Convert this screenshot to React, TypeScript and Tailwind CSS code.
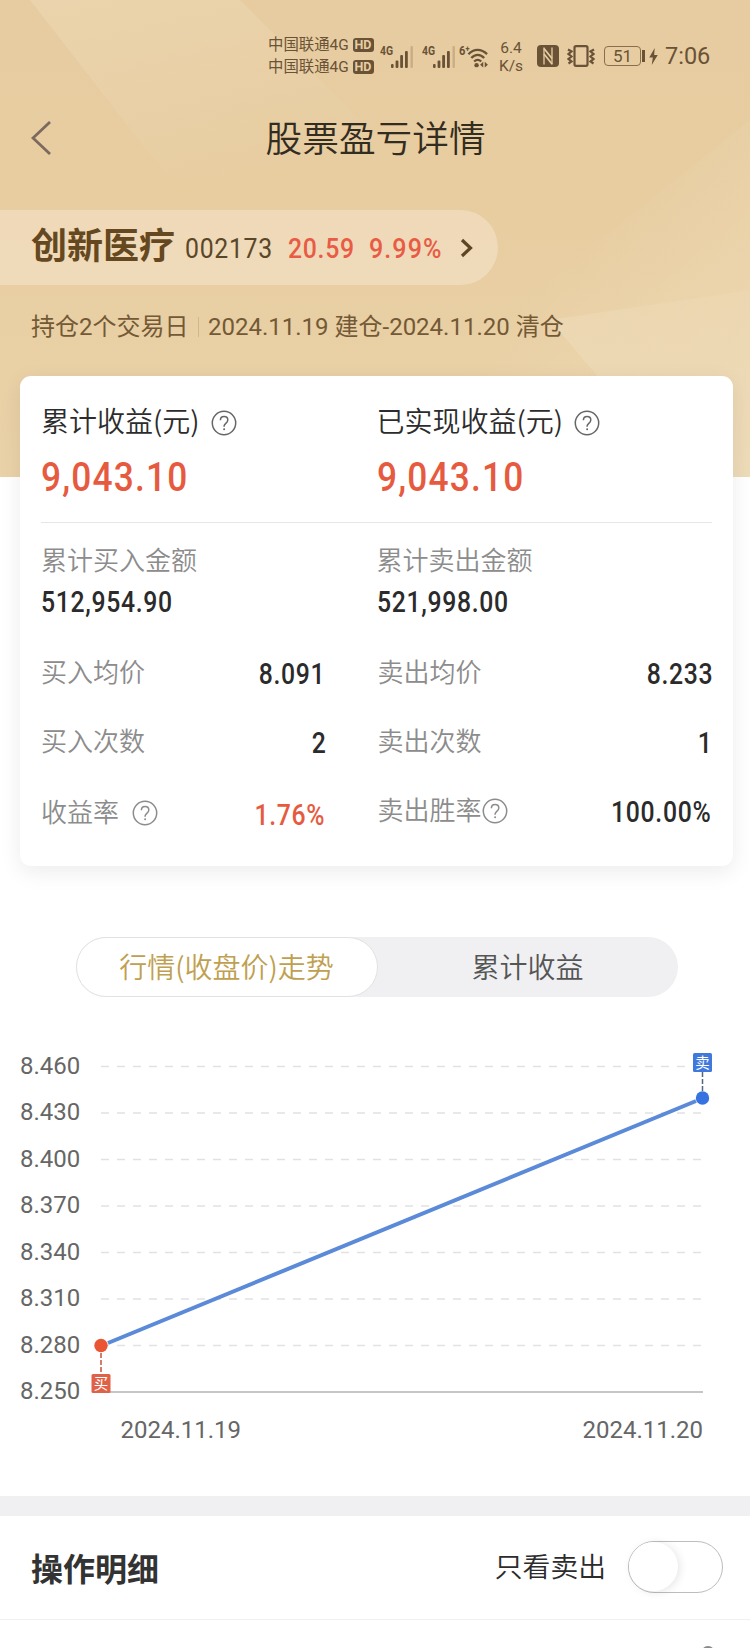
import type { ReactNode } from 'react';

type Row = {
  label: string;
  value: string;
  help?: boolean;
  red?: boolean;
  className?: string;
  valueClassName?: string;
};

const buyRows: Row[] = [
  { label: '买入均价', value: '8.091', valueClassName: 'mr-px' },
  { label: '买入次数', value: '2', valueClassName: '-mr-px' },
  { label: '收益率', value: '1.76%', help: true, red: true, className: 'pt-[5px]', valueClassName: 'mr-px' },
];

const sellRows: Row[] = [
  { label: '卖出均价', value: '8.233', valueClassName: '-mr-px' },
  { label: '卖出次数', value: '1', valueClassName: '-mr-px' },
  { label: '卖出胜率', value: '100.00%', help: true, valueClassName: 'mr-px' },
];

const ticks = ['8.460', '8.430', '8.400', '8.370', '8.340', '8.310', '8.280', '8.250'];

function HelpIcon({ className }: { className?: string }) {
  return (
    <svg viewBox="0 0 26 26" className={className} fill="none" stroke="currentColor" strokeWidth="1.5">
      <circle cx="13" cy="13" r="11.7" />
      <path d="M9.4 10.2c0-2.3 1.6-3.7 3.7-3.7s3.7 1.4 3.7 3.4c0 1.6-.9 2.5-2 3.4-1.1.9-1.7 1.6-1.7 2.8v.6" />
      <circle cx="13.1" cy="19.2" r="1" fill="currentColor" stroke="none" />
    </svg>
  );
}

function Carrier() {
  return (
    <div className="flex h-[22.5px] items-center">
      <span className="mt-px w-[84.5px] text-[15.4px] leading-none whitespace-nowrap">中国联通4G</span>
      <span className="flex h-[14px] w-[21px] items-center justify-center rounded-[3px] bg-[#6a5237] text-[12.5px] leading-none font-bold text-[#e8cda2]">
        HD
      </span>
    </div>
  );
}

function Signal() {
  return (
    <svg viewBox="0 0 24 23" className="h-[23px] w-[24px]" fill="#6a5237">
      <rect x="1" y="19" width="2.6" height="4" rx="1" />
      <rect x="5.6" y="15.5" width="2.8" height="7.5" rx="1" />
      <rect x="10.2" y="10" width="2.8" height="13" rx="1" />
      <rect x="15" y="6" width="2.8" height="17" rx="1" />
      <rect x="20.5" y="1" width="2.4" height="22" rx="1" fill="#c9ad84" />
    </svg>
  );
}

function StatusBar() {
  return (
    <div className="flex h-28 items-center pl-[268px] text-[#6a5237]">
      <div className="w-[112px]">
        <Carrier />
        <Carrier />
      </div>
      <div className="flex w-[42px]">
        <span className="-mt-px w-[10px] origin-left scale-x-[0.8] text-[13px] leading-none font-bold">4G</span>
        <Signal />
      </div>
      <div className="flex w-[37px]">
        <span className="-mt-px w-[10px] origin-left scale-x-[0.8] text-[13px] leading-none font-bold">4G</span>
        <Signal />
      </div>
      <div className="flex w-[38px]">
        <span className="-mt-px w-[7px] origin-left scale-x-[0.85] text-[13px] leading-none font-bold">6⁺</span>
        <svg viewBox="0 0 24 22" className="mt-[2px] h-[21px] w-[23px]" fill="none" stroke="currentColor" strokeWidth="2.4">
          <path d="M2.5 7.5C8 1.5 16 1.5 22 7.5" />
          <path d="M5.5 11.5c4-4.4 9.5-4.4 13.5 0" />
          <path d="M8.5 15.2c2.4-2.4 5-2.4 7.4 0" />
          <circle cx="11" cy="19" r="2.3" fill="currentColor" stroke="none" />
          <path d="m18 15.5-3.3 3 3.3 3zM19.6 15.5l3.3 3-3.3 3z" fill="currentColor" stroke="none" />
        </svg>
      </div>
      <div className="mt-px flex w-[28px] flex-col items-center text-[15.5px] leading-[18px]">
        <span>6.4</span>
        <span>K/s</span>
      </div>
      <svg viewBox="0 0 22 22" className="ml-[12px] h-[22px] w-[22px]">
        <rect width="22" height="22" rx="4" fill="#6a5237" />
        <path d="M7 2.5v17M15 2.5v17" stroke="#e8cda2" strokeWidth="1.3" />
        <path d="m7 3.5 8 10M7 9l8 10" stroke="#e8cda2" strokeWidth="1.7" />
      </svg>
      <svg viewBox="0 0 28 22" className="ml-[8px] h-[22px] w-[28px]" fill="none" stroke="currentColor" strokeWidth="2.2">
        <rect x="7.5" y="1.2" width="13" height="19.6" rx="1.5" />
        <path d="m1 4.5 3.5 2-3 2.500 3 2.500-3 2.500 3 2.500-3 2M27 4.500l-3.500 2 3 2.500-3 2.500 3 2.500-3 2.500 3 2" />
      </svg>
      <div className="ml-[9px] flex h-[20px] w-[37px] items-center justify-center rounded-[4px] border-[1.5px] border-[#8a6d4a] text-[17px] leading-none">
        51
      </div>
      <div className="ml-[1px] h-[12px] w-[3px] bg-[#6a5237]" />
      <svg viewBox="0 0 9 18" className="ml-[4px] h-[17px] w-[9px]" fill="currentColor">
        <path d="M5.8 0 0 10h3.8L2.6 18 9 7.4H5.2z" />
      </svg>
      <span className="mt-[2px] ml-[7px] text-[23.5px] leading-none">7:06</span>
    </div>
  );
}

function Backdrop() {
  return (
    <svg viewBox="0 0 750 477" className="absolute inset-x-0 top-0 h-[477px] w-full" preserveAspectRatio="none">
      <defs>
        <linearGradient id="base" x1="0" y1="0" x2="0" y2="1">
          <stop offset="0" stopColor="#e6cca0" />
          <stop offset="0.45" stopColor="#e8cda1" />
          <stop offset="1" stopColor="#ead2a8" />
        </linearGradient>
        <linearGradient id="corner" x1="0" y1="0" x2="0.5" y2="1">
          <stop offset="0" stopColor="#ecd5b0" stopOpacity="0.8" />
          <stop offset="0.4" stopColor="#ecd5b0" stopOpacity="0.5" />
          <stop offset="1" stopColor="#ecd5b0" stopOpacity="0" />
        </linearGradient>
        <linearGradient id="sheen" x1="0" y1="0" x2="1" y2="1">
          <stop offset="0.4" stopColor="#efdcba" stopOpacity="0" />
          <stop offset="1" stopColor="#efdcba" stopOpacity="0.8" />
        </linearGradient>
        <linearGradient id="facet" x1="1" y1="0.2" x2="0" y2="0.8">
          <stop offset="0" stopColor="#eddcba" stopOpacity="0.3" />
          <stop offset="1" stopColor="#eddcba" stopOpacity="0.7" />
        </linearGradient>
      </defs>
      <rect width="750" height="477" fill="url(#base)" />
      <path d="M30 0 170 180H420L240 0z" fill="url(#corner)" />
      <path d="M750 120 430 377V477H750z" fill="url(#sheen)" />
      <path d="M550 320 605 385 650 477H750V290z" fill="url(#facet)" />
    </svg>
  );
}

function Summary({ title, value }: { title: string; value: string }) {
  return (
    <div className="w-[336.5px]">
      <div className="flex h-[50px] items-center">
        <span className="text-[28px] leading-none font-[350] text-[#2c2c2c] [font-family:'Noto_Sans_CJK_SC',sans-serif]">
          {title}
        </span>
        <HelpIcon className="mt-[5px] ml-[11px] h-[26px] w-[26px] text-[#666]" />
      </div>
      <div className="flex h-[62px] items-center">
        <span className="mt-[2px] origin-left scale-x-[0.86] text-[41px] leading-none font-medium tracking-[1.4px] text-[#e65b3f]">
          {value}
        </span>
      </div>
    </div>
  );
}

function Amount({ title, value }: { title: string; value: string }) {
  return (
    <div className="w-[336.5px]">
      <div className="flex h-10 items-center text-[26px] leading-none font-[350] text-[#8c8c8c]">{title}</div>
      <div className="flex h-[42px] items-center">
        <span className="mt-[2px] origin-left scale-x-[0.84] text-[29.5px] leading-none font-medium tracking-[0.8px] text-[#2b2b2b]">
          {value}
        </span>
      </div>
    </div>
  );
}

function Rows({ rows, className }: { rows: Row[]; className: string }) {
  return (
    <div className={className}>
      {rows.map((row) => (
        <div key={row.label} className={`flex h-[69px] items-center justify-between ${row.className ?? ''}`}>
          <div className="flex items-center text-[#8c8c8c]">
            <span className="text-[26px] leading-none font-[350]">{row.label}</span>
            {row.help && (
              <HelpIcon className={row.red ? 'ml-[13px] h-[26px] w-[26px]' : 'h-[26px] w-[26px]'} />
            )}
          </div>
          <span
            className={`mt-[5px] origin-right scale-x-[0.84] text-[29.5px] leading-none font-medium tracking-[0.8px] ${row.red ? 'text-[#e65b3f]' : 'text-[#2b2b2b]'} ${row.valueClassName ?? ''}`}
          >
            {row.value}
          </span>
        </div>
      ))}
    </div>
  );
}

function Marker({ x, y, fill, children }: { x: number; y: number; fill: string; children: ReactNode }) {
  return (
    <g>
      <rect x={x - 9.5} y={y} width="19" height="19" rx="1.5" fill={fill} />
      <text x={x} y={y + 14.8} textAnchor="middle" fontSize="14.5" fill="#fff">
        {children}
      </text>
    </g>
  );
}

function Chart() {
  return (
    <svg viewBox="0 0 750 410" className="mt-[43px] block h-[410px] w-full">
      {ticks.map((tick, i) => {
        const y = 26.5 + i * 46.5;
        const last = i === ticks.length - 1;
        return (
          <g key={tick}>
            <text x="20" y={y + 7} fontSize="24" fill="#666">
              {tick}
            </text>
            <line
              x1="101"
              x2="703"
              y1={y}
              y2={y}
              stroke={last ? '#c6c6c6' : '#e2e2e2'}
              strokeWidth={last ? 2 : 1.5}
              strokeDasharray={last ? undefined : '8 8'}
            />
          </g>
        );
      })}
      <line x1="108" y1="303" x2="696" y2="61" stroke="#5a8ad8" strokeWidth="4" />
      <line x1="101" y1="306" x2="101" y2="334" stroke="#c8503c" strokeWidth="1.5" strokeDasharray="5 2" />
      <line x1="702.5" y1="32" x2="702.5" y2="58" stroke="#54657f" strokeWidth="1.5" strokeDasharray="5 2" />
      <circle cx="101" cy="305.5" r="6.7" fill="#ea5634" />
      <circle cx="702.5" cy="58" r="6.7" fill="#3673e0" />
      <Marker x={101} y={334} fill="#df6148">
        买
      </Marker>
      <Marker x={702.5} y={13} fill="#4079dc">
        卖
      </Marker>
      <text x="120.5" y="398" fontSize="24" fill="#666">
        2024.11.19
      </text>
      <text x="703" y="398" fontSize="24" fill="#666" textAnchor="end">
        2024.11.20
      </text>
    </svg>
  );
}

export default function App() {
  return (
    <div
      lang="zh-CN"
      className="relative h-[1648px] w-[750px] overflow-hidden bg-white [font-family:Roboto,'Noto_Sans_CJK_SC',sans-serif]"
    >
      <Backdrop />
      <div className="relative">
        <StatusBar />

        <div className="flex h-[54px] items-center">
          <svg viewBox="0 0 20 34" className="-mt-[3px] ml-[31px] h-[34px] w-5" fill="none" stroke="#7c6a5c" strokeWidth="2.8">
            <path d="M19 1 2 17l17 16" />
          </svg>
          <h1 className="mt-[3px] ml-[214.5px] text-[36.7px] leading-none font-[350] text-[#332c20]">股票盈亏详情</h1>
        </div>

        <div className="mt-11 flex h-[75px] w-[498px] items-center rounded-r-full bg-[#f4e4cc]/55 pl-[31px] whitespace-nowrap">
          <span className="mb-[2px] w-[154px] text-[36px] leading-none font-bold text-[#654820]">创新医疗</span>
          <span className="mt-[4px] w-[103px] origin-left scale-x-[0.87] text-[28.5px] leading-none tracking-[0.8px] text-[#5a4728]">
            002173
          </span>
          <span className="mt-[4px] w-[81px] origin-left scale-x-[0.87] text-[28.5px] leading-none font-medium tracking-[0.8px] text-[#e85c45]">
            20.59
          </span>
          <span className="mt-[4px] w-[91px] origin-left scale-x-[0.88] text-[28.5px] leading-none font-medium tracking-[1.2px] text-[#e85c45]">
            9.99%
          </span>
          <svg viewBox="0 0 14 20" className="mt-px h-5 w-[14px]" fill="none" stroke="#5c4624" strokeWidth="3.2">
            <path d="m2 2 8.5 8L2 18" />
          </svg>
        </div>

        <div className="mt-[27px] flex h-[30px] items-center pl-[31px] text-[24px] leading-none whitespace-nowrap text-[#735935]">
          <span className="w-[167px]">持仓2个交易日</span>
          <span className="h-5 w-px bg-[#d2b78c]" />
          <span className="ml-[9px]">2024.11.19 建仓-2024.11.20 清仓</span>
        </div>

        <div className="mt-[34px] ml-5 h-[490px] w-[713px] rounded-[11px] bg-white px-[21px] pt-[19px] shadow-[0_6px_22px_rgba(0,0,0,0.08)]">
          <div className="flex">
            <Summary title="累计收益(元)" value="9,043.10" />
            <Summary title="已实现收益(元)" value="9,043.10" />
          </div>
          <div className="mt-[15px] mb-[18px] h-px bg-[#e6e6e6]" />
          <div className="flex">
            <Amount title="累计买入金额" value="512,954.90" />
            <Amount title="累计卖出金额" value="521,998.00" />
          </div>
          <div className="mt-[15px] flex justify-between">
            <Rows rows={buyRows} className="w-[285px]" />
            <Rows rows={sellRows} className="w-[334.5px]" />
          </div>
        </div>

        <div className="mt-[71px] ml-[75.5px] flex h-[60px] w-[602px] rounded-full bg-[#f0f0f3] text-[28px] leading-none font-[350] [font-family:'Noto_Sans_CJK_SC',sans-serif]">
          <div className="flex w-[302px] items-center justify-center rounded-full border-[1.5px] border-[#e2e2e2] bg-white pb-[2px] text-[#bfa050]">
            行情(收盘价)走势
          </div>
          <div className="flex flex-1 items-center justify-center pb-[2px] text-[#555]">累计收益</div>
        </div>

        <Chart />

        <div className="mt-[46px] h-5 bg-[#f0f0f2]" />
        <div className="flex h-[102.5px] items-center pr-[27px] pl-[31px]">
          <span className="mt-[5px] text-[32px] leading-none font-bold text-[#333]">操作明细</span>
          <span className="mt-px ml-auto text-[27.8px] leading-none font-[350] text-[#2c2c2c]">只看卖出</span>
          <div className="ml-[22px] h-[52px] w-[95px] rounded-full border-[1.5px] border-[#bdbdbd]">
            <div className="h-[49px] w-[49px] rounded-full bg-white shadow-[2px_1px_8px_rgba(0,0,0,0.1)]" />
          </div>
        </div>
        <div className="h-[1.5px] bg-[#f0f0f0]" />
        <div className="mt-[26px] ml-[701px] h-[14px] w-[14px] rounded-full border-2 border-[#8a8a8a]" />
      </div>
    </div>
  );
}
